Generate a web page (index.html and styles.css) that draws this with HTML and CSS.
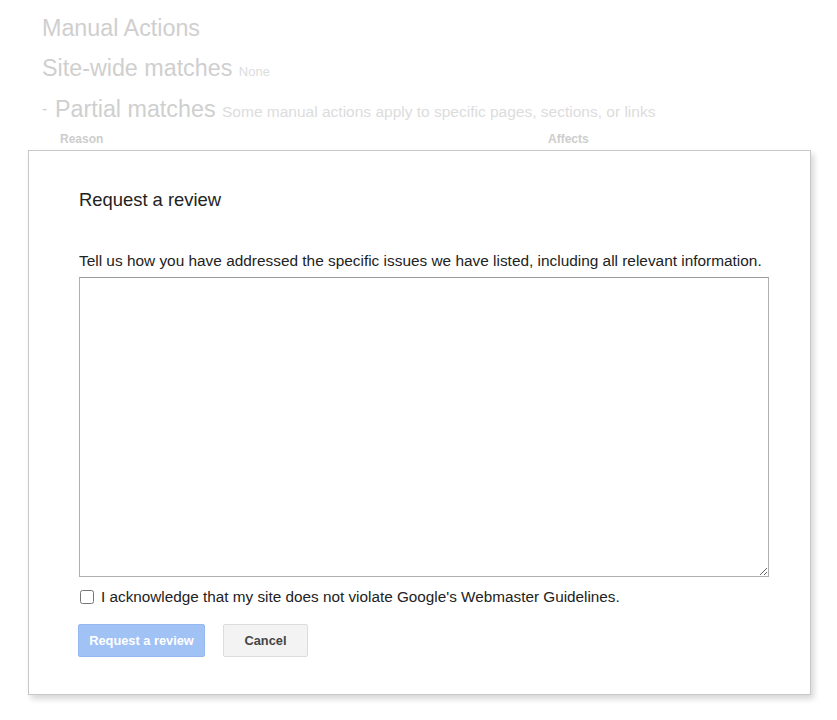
FILE: index.html
```html
<!DOCTYPE html>
<html><head>
<meta charset="UTF-8">
<title>Manual Actions</title>
<link rel="stylesheet" href="styles.css">
</head>
<body>
<div class="page">
 <h1>Manual Actions</h1>
 <h2>Site-wide matches <small>None</small></h2>
 <h2 class="partial"><span class="toggle">-</span>Partial matches <small>Some manual actions apply to specific pages, sections, or links</small></h2>
 <table class="matches">
  <thead>
   <tr><th class="reason">Reason</th><th>Affects</th></tr>
  </thead>
 </table>
</div>
<div class="dialog">
 <h3>Request a review</h3>
 <p class="prompt">Tell us how you have addressed the specific issues we have listed, including all relevant information.</p>
 <textarea class="answer"></textarea>
 <label class="ack"><input type="checkbox"> I acknowledge that my site does not violate Google's Webmaster Guidelines.</label>
 <div class="buttons">
  <button class="btn primary" disabled>Request a review</button>
  <button class="btn">Cancel</button>
 </div>
</div>
</body></html>
```

FILE: styles.css
```css
:root {
  font-family: "Liberation Sans", Arial, sans-serif;
}
body {
  margin: 0;
  background: #fff;
}
.page {
  padding: 13px 0 0 42px;
  color: #cfcfcf;
}
h1, h2 {
  font-weight: normal;
  margin: 0;
}
h1 {
  font-size: 23.3px;
  line-height: 30px;
}
h2 {
  font-size: 23.3px;
  line-height: 30px;
  margin-top: 10px;
}
h2 small {
  font-size: 13px;
  color: #dcdcdc;
}
h2.partial {
  margin-top: 7px;
}
h2.partial small {
  font-size: 15.5px;
}
.toggle {
  display: inline-block;
  font-size: 16px;
  vertical-align: 3px;
  width: 13px;
}
.matches {
  margin-left: 14px;
  border-spacing: 0;
}
.matches th {
  font-size: 12px;
  color: #cdcdcd;
  text-align: start;
  padding: 5px 0 0 4px;
}
.matches th.reason {
  width: 484px;
}
.dialog {
  position: absolute;
  left: 28px;
  top: 150px;
  width: 706px;
  height: 543px;
  padding: 0 25px 0 50px;
  background: #fff;
  border: 1px solid #c8c8c8;
  box-shadow: 3px 4px 6px rgba(0, 0, 0, .16);
  color: #222;
}
h3 {
  font-size: 18.4px;
  font-weight: normal;
  margin: 38px 0 0;
  line-height: 22px;
}
.prompt {
  font-size: 15.4px;
  margin: 40px 0 0;
  line-height: 20px;
}
.answer {
  display: block;
  box-sizing: border-box;
  width: 690px;
  height: 300px;
  margin-top: 6px;
  border: 1px solid #b0b0b0;
  border-top-color: #9a9a9a;
  resize: both;
}
.ack {
  display: flex;
  align-items: center;
  font-size: 15.3px;
  margin-top: 10px;
  line-height: 20px;
}
.ack input {
  width: 14px;
  height: 14px;
  margin: 0 7px 0 1px;
}
.buttons {
  display: flex;
  gap: 18px;
  margin-top: 17px;
  margin-left: -1px;
}
.btn {
  font-family: inherit;
  font-size: 12.8px;
  font-weight: bold;
  height: 33px;
  padding: 0;
  border-radius: 2px;
  border: 1px solid #dcdcdc;
  background: #f3f3f3;
  color: #444;
  width: 85px;
}
.btn.primary {
  width: 127px;
  background: #a0c2f5;
  border-color: #95b8f0;
  color: #fff;
}
```
